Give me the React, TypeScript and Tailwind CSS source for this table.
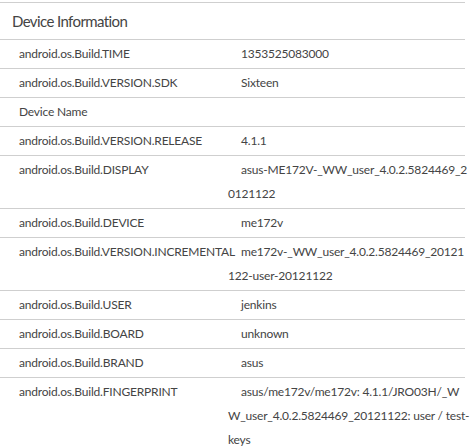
import React from 'react';

const rows: [string, string][] = [
  ['android.os.Build.TIME', '1353525083000'],
  ['android.os.Build.VERSION.SDK', 'Sixteen'],
  ['Device Name', ''],
  ['android.os.Build.VERSION.RELEASE', '4.1.1'],
  ['android.os.Build.DISPLAY', 'asus-ME172V-_WW_user_4.0.2.5824469_20121122'],
  ['android.os.Build.DEVICE', 'me172v'],
  ['android.os.Build.VERSION.INCREMENTAL', 'me172v-_WW_user_4.0.2.5824469_20121122-user-20121122'],
  ['android.os.Build.USER', 'jenkins'],
  ['android.os.Build.BOARD', 'unknown'],
  ['android.os.Build.BRAND', 'asus'],
  ['android.os.Build.FINGERPRINT', 'asus/me172v/me172v: 4.1.1/JRO03H/_WW_user_4.0.2.5824469_20121122: user / test-keys'],
];

export default function App() {
  return (
    <div className="h-[447px] overflow-hidden bg-white text-[#444] font-['Lato','Liberation_Sans',sans-serif]">
      <div className="mt-[2px] w-[465px] border-t border-[#cfcfcf]">
        <div className="flex h-[37px] items-center border-b border-[#cfcfcf] pl-[12px] text-[15px] tracking-[-0.6px]">Device Information</div>
        {rows.map(([k, v]) => (
          <div key={k} className="flex border-b border-[#cfcfcf] py-[2px] text-[12px] leading-[24px] tracking-[-0.2px]">
            <div className="w-[228px] shrink-0 pl-[19px]">{k}</div>
            <div className="mr-[-5px] min-w-0 flex-1 indent-[13px] break-all">{v}</div>
          </div>
        ))}
      </div>
    </div>
  );
}
